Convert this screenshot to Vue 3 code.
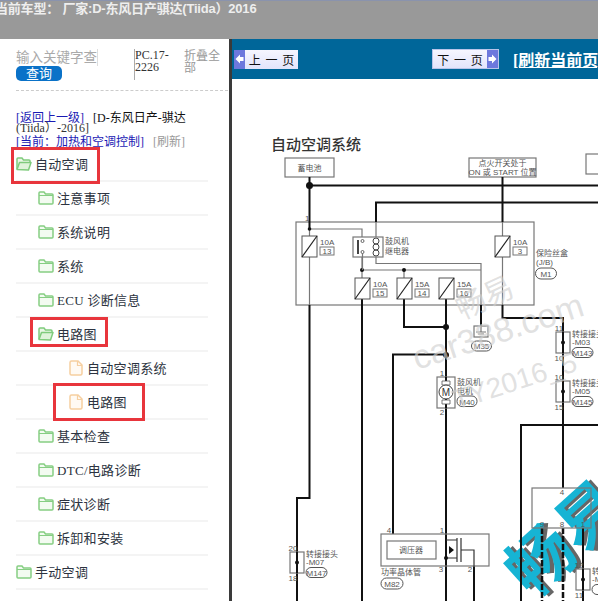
<template>
  <div class="page">
    <header class="topbar">当前车型：   厂家:D-东风日产骐达(Tiida）2016</header>
    <div class="body">
      <aside class="side">
        <div class="search">
          <div class="search-left">
            <div class="search-input">输入关键字查</div>
            <div class="search-btn">查询</div>
          </div>
          <div class="code">PC.17-2226</div>
          <div class="fold">折叠全部</div>
        </div>
        <div class="crumbs">
          <div class="crumb-top"><a class="link">[返回上一级]</a><span class="crumb-name">[D-东风日产-骐达</span></div>
          <div class="crumb-year">(Tiida）-2016]</div>
          <div class="crumb-now"><a class="link">[当前：加热和空调控制]</a><span class="refresh">[刷新]</span></div>
        </div>
        <ul class="tree">
          <li v-for="row in rows" :key="row.id" class="row" :class="'lv' + row.level">
            <svg v-if="row.icon === 'file'" class="icon file" viewBox="0 0 14 16">
              <path d="M1 2.500q0-1.500 1.500-1.500H9l4 4v8.500q0 1.500-1.500 1.500h-9Q1 15 1 13.500z" fill="#fffaf3" stroke="#f6cfa0" stroke-width="1.500" />
              <path d="M8.500 1v4.500H13" fill="none" stroke="#f6cfa0" stroke-width="1.200" />
            </svg>
            <svg v-else-if="row.icon === 'open'" class="icon" viewBox="0 0 16 14">
              <path d="M1 12V2q0-1 1-1h4l1.500 2H13q1 0 1 1v1.500" fill="#eaf7e6" stroke="#7fcb7c" stroke-width="1.500" />
              <path d="M1 12.500 3.500 5.500H15l-2.500 7.500z" fill="#dff3da" stroke="#7fcb7c" stroke-width="1.500" stroke-linejoin="round" />
            </svg>
            <svg v-else class="icon" viewBox="0 0 16 14">
              <path d="M1 12V2q0-1 1-1h4l1.500 2H14q1 0 1 1v8q0 1-1 1H2q-1 0-1-1z" fill="#f3fbf1" stroke="#86ce83" stroke-width="1.500" />
              <path d="M1 4.500H15" stroke="#86ce83" stroke-width="1" />
            </svg>
            <span class="label">{{ row.label }}</span>
            <i v-if="row.mark" class="mark" :class="row.mark"></i>
          </li>
        </ul>
      </aside>

      <main class="main">
        <div class="toolbar">
          <div class="pager prev">
            <span class="pager-arrow">
              <svg width="9" height="10" viewBox="0 0 9 10"><path d="M5 .5 .5 5 5 9.500V7h3.500V3H5z" fill="#fff" /></svg>
            </span>
            <span class="pager-text">上 一 页</span>
          </div>
          <div class="pager next">
            <span class="pager-text">下 一 页</span>
            <span class="pager-arrow">
              <svg width="9" height="10" viewBox="0 0 9 10"><path d="M4 .5 8.500 5 4 9.500V7H.5V3H4z" fill="#fff" /></svg>
            </span>
          </div>
          <a class="reload">[刷新当前页]</a>
        </div>
        <div class="sheet">
          <svg class="diagram" width="366" height="522" viewBox="232 79 366 522">
            <!-- big watermark stays under the wiring -->
            <g transform="translate(532 600) rotate(-42)" class="wm-big">
              <text x="3" y="3" class="wm-shadow">畅易</text>
              <text class="wm-teal">畅易</text>
            </g>

            <text x="271" y="150" class="title">自动空调系统</text>

            <rect x="285" y="158" width="49" height="19" class="box" />
            <text x="309.500" y="171" class="t mid">蓄电池</text>
            <rect x="469" y="158" width="67" height="19" class="box" />
            <text x="502.500" y="166" class="t mid">点火开关处于</text>
            <text x="502.500" y="175" class="t mid">ON 或 START 位置</text>
            <rect x="586" y="154" width="20" height="20" class="box" />

            <!-- fuse block -->
            <rect x="296" y="222" width="238" height="83" class="box" />
            <path d="M376 222V263.500H481V305" class="thin" />

            <!-- power rails -->
            <path d="M309.500 177V229M309.500 185.500H598M376 222V202.500H598M502.500 177V222" class="wire" />
            <path d="M309.500 229H362V270M362 270H481M404 270V278M362 270V278M309.500 229V305M502.500 222V305" class="thin" />
            <path d="M362 298V601M309.500 305V498H297V601M404 298V327H446M446 298V601M481 305V326M502.500 305V318H563V488M393 534V354.500H446M474 566V601" class="wire" />
            <path d="M521 601V425H598M583 528V601" class="wire" />
            <path d="M542 528V601M563 528V601" class="wire dash" />

            <circle cx="309.500" cy="185.500" r="3.500" class="dot" />
            <circle cx="309.500" cy="229" r="1.800" class="dot" />
            <circle cx="362" cy="270" r="2" class="dot" />
            <circle cx="404" cy="270" r="2" class="dot" />
            <circle cx="446" cy="327" r="3" class="dot" />
            <circle cx="446" cy="355" r="3" class="dot" />

            <text x="305" y="221" class="t">1</text>

            <!-- fuses -->
            <g v-for="f in fuses" :key="f.no">
              <rect :x="f.x" :y="f.y" width="15" height="21" class="fuse" />
              <path :d="`M${f.x} ${f.y + 21}L${f.x + 15} ${f.y}`" class="fuse-line" />
              <text :x="f.x + 18" :y="f.y + 9" class="t">{{ f.amp }}</text>
              <rect :x="f.x + 18" :y="f.y + 11" width="14" height="8" class="label-box" />
              <text :x="f.x + 25" :y="f.y + 18" class="t mid">{{ f.no }}</text>
            </g>

            <!-- relay -->
            <rect x="353" y="237" width="30" height="20" class="box white" />
            <rect x="357" y="240" width="2" height="14" fill="#444" />
            <circle cx="362.500" cy="241" r="1.500" class="open-dot" />
            <circle cx="362.500" cy="252" r="1.500" class="open-dot" />
            <path d="M362.500 253V270" class="thin" />
            <ellipse cx="376" cy="241" rx="3" ry="3" class="coil" />
            <ellipse cx="376" cy="247" rx="3" ry="3" class="coil" />
            <ellipse cx="376" cy="253" rx="3" ry="3" class="coil" />
            <text x="385" y="244" class="t">鼓风机</text>
            <text x="385" y="254" class="t">继电器</text>

            <text x="536" y="256" class="t">保险丝盒</text>
            <text x="536" y="265" class="t">(J/B)</text>
            <rect x="535.500" y="268" width="21" height="11" rx="5.500" class="pill" />
            <text x="546" y="276.500" class="t mid">M1</text>

            <!-- M35 ground -->
            <rect x="474" y="326" width="14" height="11" class="box white" />
            <path d="M481 326V332M476 332H486M478 334H484" class="thin" />
            <rect x="471.500" y="341" width="20" height="10" rx="5" class="pill" />
            <text x="481.500" y="349" class="t mid">M35</text>

            <!-- connectors -->
            <g v-for="c in connectors" :key="c.code">
              <rect :x="c.x" :y="c.y" width="14" height="21" class="box white" />
              <path :d="`M${c.x + 7} ${c.y}V${c.y + 21}`" class="wire" />
              <circle :cx="c.x + 7" :cy="c.y + 10.500" r="2" class="dot" />
              <text :x="c.x + 3" :y="c.y - 1" class="t mid">{{ c.top }}</text>
              <text :x="c.x + 3" :y="c.y + 29" class="t mid">{{ c.bottom }}</text>
              <text :x="c.x + 16" :y="c.y + 5" class="t">转接接头</text>
              <text :x="c.x + 16" :y="c.y + 13" class="t">{{ c.code }}</text>
              <rect :x="c.x + 16" :y="c.y + 15.500" width="21" height="10" rx="5" class="pill" />
              <text :x="c.x + 26.500" :y="c.y + 23.500" class="t mid">{{ c.pill }}</text>
            </g>

            <!-- blower motor -->
            <rect x="437" y="377" width="18" height="31" class="box white" />
            <path d="M446 377V408" class="wire" />
            <path d="M442 381H450V385H442zM442 400H450V404H442z" fill="#fff" stroke="#555" stroke-width=".8" />
            <circle cx="446" cy="392" r="7" fill="#fff" stroke="#444" />
            <text x="446" y="395.500" class="t mid big">M</text>
            <text x="442" y="376" class="t mid">1</text>
            <text x="442" y="415" class="t mid">2</text>
            <text x="457" y="385" class="t">鼓风机</text>
            <text x="457" y="394" class="t">电机</text>
            <rect x="457" y="396" width="20" height="10.500" rx="5" class="pill" />
            <text x="467" y="404.500" class="t mid">M40</text>

            <!-- regulator and power transistor -->
            <rect x="381" y="534" width="108" height="32" class="box" fill-opacity="0" />
            <rect x="387" y="541" width="49" height="18" class="box white" />
            <text x="411" y="553" class="t mid">调压器</text>
            <text x="389" y="533" class="t mid">4</text>
            <text x="442" y="533" class="t mid">1</text>
            <text x="441" y="572" class="t mid">3</text>
            <text x="470" y="572" class="t mid">2</text>
            <path d="M457 538V562M461 538V562M461 550H474V566M446 540H457M446 558H457" class="thin dark" />
            <path d="M449 546 454 550 449 554z" fill="#111" />
            <circle cx="446" cy="558" r="2" class="dot" />
            <text x="381" y="575" class="t">功率晶体管</text>
            <rect x="381" y="578" width="22" height="11" rx="5.500" class="pill" />
            <text x="392" y="586.500" class="t mid">M82</text>

            <!-- module at the lower right -->
            <rect x="532" y="488" width="59" height="40" class="box" fill-opacity="0" />
            <text x="562" y="495" class="t mid">4</text>
            <text x="542" y="527" class="t mid">9</text>
            <text x="562" y="527" class="t mid">8</text>
            <text x="583" y="527" class="t mid">1</text>

            <!-- grey watermarks -->
            <g class="wm-grey">
              <text transform="translate(462 320) rotate(-25)" font-size="30">畅易</text>
              <text transform="translate(417 370) rotate(-18)" font-size="34">car388.com</text>
              <text transform="translate(456 410) rotate(-18)" font-size="28">TY2016_5</text>
            </g>
          </svg>
        </div>
      </main>
    </div>
  </div>
</template>

<script setup>
const rows = [
  { id: 1, level: 0, icon: 'open', label: '自动空调', mark: 'mark-a' },
  { id: 2, level: 1, icon: 'folder', label: '注意事项' },
  { id: 3, level: 1, icon: 'folder', label: '系统说明' },
  { id: 4, level: 1, icon: 'folder', label: '系统' },
  { id: 5, level: 1, icon: 'folder', label: 'ECU 诊断信息' },
  { id: 6, level: 1, icon: 'open', label: '电路图', mark: 'mark-b' },
  { id: 7, level: 2, icon: 'file', label: '自动空调系统' },
  { id: 8, level: 2, icon: 'file', label: '电路图', mark: 'mark-c' },
  { id: 9, level: 1, icon: 'folder', label: '基本检查' },
  { id: 10, level: 1, icon: 'folder', label: 'DTC/电路诊断' },
  { id: 11, level: 1, icon: 'folder', label: '症状诊断' },
  { id: 12, level: 1, icon: 'folder', label: '拆卸和安装' },
  { id: 13, level: 0, icon: 'folder', label: '手动空调' },
]

const fuses = [
  { no: 13, amp: '10A', x: 302, y: 236 },
  { no: 15, amp: '10A', x: 355, y: 278 },
  { no: 14, amp: '15A', x: 397, y: 278 },
  { no: 16, amp: '15A', x: 439, y: 278 },
  { no: 3, amp: '10A', x: 495, y: 236 },
]

const connectors = [
  { code: '-M07', pill: 'M147', top: 20, bottom: 18, x: 290, y: 552 },
  { code: '-M03', pill: 'M143', top: 11, bottom: 10, x: 556, y: 332 },
  { code: '-M05', pill: 'M145', top: 10, bottom: 15, x: 556, y: 381 },
  { code: '-M', pill: 'M', top: 12, bottom: 11, x: 576, y: 569 },
]
</script>

<style>
html,
body {
  margin: 0;
  background: #fff;
}
</style>

<style scoped>
.page {
  width: 598px;
  height: 601px;
  overflow: hidden;
  display: flex;
  flex-direction: column;
  font-family: "Liberation Serif", "Noto Sans CJK SC", serif;
  background: #fff;
}

.topbar {
  height: 39px;
  box-sizing: border-box;
  flex: none;
  margin-left: -5px;
  border-top: 1px solid #8a93ad;
  background: #999;
  color: #eee;
  font-family: "Liberation Sans", "Noto Sans CJK SC", sans-serif;
  font-size: 13px;
  font-weight: 700;
  letter-spacing: -0.2px;
  line-height: 16px;
  white-space: pre;
}

.body {
  flex: 1;
  display: flex;
  min-height: 0;
}

.side {
  width: 232px;
  flex: none;
  box-sizing: border-box;
  border-right: 3px solid #3a3a3a;
  padding-left: 16px;
  overflow: hidden;
}

.search {
  display: flex;
  height: 52px;
  box-sizing: border-box;
  padding-top: 10px;
  border-bottom: 1px dashed #ccc;
  margin-right: 1px;
}

.search-left {
  width: 118px;
  flex: none;
}

.search-input {
  width: 82px;
  height: 17px;
  border-right: 1px solid #ddd;
  box-sizing: border-box;
  color: #aaa;
  font-size: 13.500px;
  line-height: 17px;
  white-space: nowrap;
  overflow: hidden;
}

.search-btn {
  width: 46px;
  height: 15px;
  border-radius: 5px;
  background: #0a72c8;
  color: #fff;
  font-size: 13px;
  line-height: 15px;
  text-align: center;
}

.code {
  width: 50px;
  height: 31px;
  flex: none;
  box-sizing: border-box;
  border-left: 1px solid #aaa;
  font-size: 12px;
  line-height: 12px;
  color: #333;
}

.fold {
  width: 38px;
  color: #999;
  font-size: 12px;
  line-height: 12px;
  padding-top: 1px;
}

.crumbs {
  padding-top: 21px;
  font-size: 12px;
  color: #111;
  white-space: nowrap;
}

.crumb-top {
  height: 11px;
  line-height: 12px;
}

.crumb-name {
  margin-left: 9px;
}

.crumb-year {
  height: 11px;
  line-height: 11px;
  color: #333;
}

.crumb-now {
  height: 13px;
  padding-top: 1px;
  line-height: 14px;
}

.link {
  color: #1a1ab4;
}

.refresh {
  margin-left: 9px;
  color: #999;
}

.tree {
  list-style: none;
  margin: 0;
  padding: 0;
  width: 192px;
}

.row {
  position: relative;
  display: flex;
  align-items: center;
  height: 34px;
  box-sizing: border-box;
  border-bottom: 2px solid #f4f4f4;
}

.lv1 {
  padding-left: 22px;
}

.lv2 {
  padding-left: 53px;
}

.icon {
  width: 16px;
  height: 14px;
  flex: none;
  margin-right: 3px;
}

.icon.file {
  width: 14px;
  height: 16px;
  margin-right: 4px;
}

.label {
  margin-bottom: 2px;
  font-size: 13px;
  letter-spacing: 0.3px;
  color: #2c3340;
  white-space: nowrap;
}

.mark {
  position: absolute;
  box-sizing: border-box;
  border: 3px solid #e8353c;
  pointer-events: none;
}

.mark-a {
  left: -5px;
  top: -1px;
  width: 89px;
  height: 37px;
}

.mark-b {
  left: 14px;
  top: -1px;
  width: 78px;
  height: 30px;
}

.mark-c {
  left: 37px;
  top: -3px;
  width: 92px;
  height: 38px;
}

.main {
  flex: 1;
  min-width: 0;
  overflow: hidden;
  display: flex;
  flex-direction: column;
}

.toolbar {
  height: 40px;
  flex: none;
  display: flex;
  align-items: center;
  padding-left: 2px;
  background: #006699;
  white-space: nowrap;
}

.pager {
  display: flex;
  align-items: center;
  height: 19px;
  background: linear-gradient(180deg, #f6f6ff, #e2e4fb);
  color: #111;
  font-size: 12px;
}

.prev {
  width: 64px;
  flex: none;
}

.next {
  width: 67px;
  flex: none;
  height: 20px;
  margin-left: 134px;
  box-sizing: border-box;
  border: 1px solid #b9c4ea;
}

.pager-arrow {
  width: 11px;
  align-self: stretch;
  flex: none;
  display: flex;
  align-items: center;
  justify-content: center;
  background: #6d78dd;
}

.pager-text {
  flex: 1;
  text-align: center;
  font-family: "Noto Sans CJK SC", sans-serif;
  word-spacing: 2px;
}

.reload {
  margin-left: 14px;
  color: #fff;
  font-size: 16px;
  font-weight: 700;
  text-decoration: underline;
}

.sheet {
  flex: 1;
  background: #fff;
  overflow: hidden;
}

.diagram {
  display: block;
  font-family: "Liberation Sans", "Noto Sans CJK SC", sans-serif;
}

.title {
  font-size: 15px;
  fill: #333;
  font-weight: 500;
}

.t {
  font-size: 8px;
  fill: #555;
}

.mid {
  text-anchor: middle;
}

.big {
  font-size: 10px;
  fill: #333;
}

.box {
  fill: #fff;
  stroke: #777;
  stroke-width: 1.200;
}

.white {
  fill: #fff;
}

.wire {
  fill: none;
  stroke: #111;
  stroke-width: 2;
}

.dash {
  stroke-width: 2.500;
  stroke-dasharray: 6 2;
}

.thin {
  fill: none;
  stroke: #777;
  stroke-width: 1.200;
}

.dark {
  stroke: #333;
}

.dot {
  fill: #111;
}

.fuse {
  fill: #fff;
  stroke: #555;
}

.fuse-line {
  stroke: #222;
  stroke-width: 1.200;
}

.label-box {
  fill: #fff;
  stroke: #777;
}

.pill {
  fill: #fff;
  stroke: #555;
}

.open-dot {
  fill: #fff;
  stroke: #444;
  stroke-width: 0.800;
}

.coil {
  fill: none;
  stroke: #444;
}

.wm-grey text {
  fill: #d0d0d0;
  fill-opacity: 0.65;
}

.wm-big text {
  font-size: 66px;
  font-weight: 700;
  font-family: "Noto Sans CJK SC", sans-serif;
}

.wm-shadow {
  fill: #666;
}

.wm-teal {
  fill: #16b4d4;
}
</style>
